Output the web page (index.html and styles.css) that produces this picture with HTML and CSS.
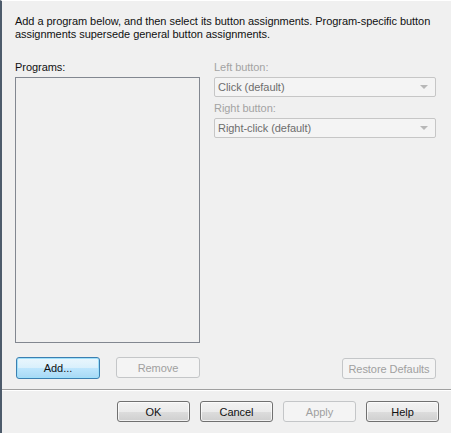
FILE: index.html
```html
<!DOCTYPE html>
<html lang="en">
<head>
    <meta charset="UTF-8">
    <title>Program Button Assignments</title>
    <link rel="stylesheet" href="styles.css">
</head>
<body>
    <div class="dialog">
        <div class="content">
            <p class="intro">Add a program below, and then select its button assignments. Program-specific button assignments supersede general button assignments.</p>
            <div class="panes">
                <!-- Program list -->
                <div class="programs-pane">
                    <label class="field-label">Programs:</label>
                    <div class="listbox"></div>
                    <div class="list-buttons">
                        <button class="button default add">Add...</button>
                        <button class="button disabled remove">Remove</button>
                    </div>
                </div>
                <!-- Button assignments -->
                <div class="assign-pane">
                    <label class="field-label disabled-label">Left button:</label>
                    <div class="combo"><span>Click (default)</span><span class="arrow"></span></div>
                    <label class="field-label disabled-label second">Right button:</label>
                    <div class="combo"><span>Right-click (default)</span><span class="arrow"></span></div>
                    <button class="button disabled restore">Restore Defaults</button>
                </div>
            </div>
        </div>
        <div class="footer">
            <button class="button">OK</button>
            <button class="button">Cancel</button>
            <button class="button disabled">Apply</button>
            <button class="button">Help</button>
        </div>
    </div>
</body>
</html>
```

FILE: styles.css
```css
/* General */
body {
    margin: 0;
    width: 451px;
    height: 433px;
    overflow: hidden;
    background-color: #f0f0f0;
    font-family: "Liberation Sans", Arial, sans-serif;
    font-size: 11px;
    letter-spacing: -0.05px;
    color: #111111;
}

.dialog {
    height: 433px;
    box-sizing: border-box;
    border-left: 2px solid #4d5b6b; /* window frame */
    border-top: 1px solid #ffffff;
    display: flex;
    flex-direction: column;
}

.content {
    padding: 0 13px 0 13px;
}

/* Intro text */
.intro {
    margin: 14px 0 0 0;
    line-height: 13px;
}

/* Two panes */
.panes {
    display: flex;
    gap: 14px;
    margin-top: 20px;
}

.programs-pane {
    width: 185px;
    display: flex;
    flex-direction: column;
}

.assign-pane {
    width: 222px;
    display: flex;
    flex-direction: column;
}

.field-label {
    display: block;
    line-height: 13px;
    height: 13px;
    margin-bottom: 3px;
}

.disabled-label {
    color: #a3a3a3;
}

.second {
    margin-top: 5px;
}

/* Program list */
.listbox {
    height: 264px;
    border: 1px solid #828790;
    background-color: #f0f0f0;
}

.list-buttons {
    display: flex;
    gap: 16px;
    margin-top: 14px;
    padding-left: 1px;
}

/* Combos */
.combo {
    height: 18px;
    border: 1px solid #c6c6c6;
    border-radius: 2px;
    background-color: #f4f4f4;
    color: #6d6d6d;
    display: flex;
    align-items: center;
    justify-content: space-between;
    padding: 0 7px 0 3px;
    line-height: 18px;
}

.arrow {
    width: 0;
    height: 0;
    border-left: 4px solid transparent;
    border-right: 4px solid transparent;
    border-top: 4px solid #b8b8b8;
}

/* Buttons */
.button {
    font-family: inherit;
    font-size: 11px;
    letter-spacing: -0.05px;
    white-space: nowrap;
    height: 21px;
    width: 73px;
    padding: 0;
    color: #111111;
    border: 1px solid #707070;
    border-radius: 3px;
    background: linear-gradient(#f2f2f2 0%, #ebebeb 50%, #dddddd 51%, #cfcfcf 100%);
    box-shadow: inset 0 0 0 1px rgba(255, 255, 255, 0.7);
}

.default {
    border-color: #3c7fb1;
    background: linear-gradient(#eaf6fd 0%, #d9f0fc 50%, #bee6fd 51%, #a7d9f5 100%);
    box-shadow: inset 0 0 0 1px #9fe0fa;
}

.disabled {
    color: #a0a0a0;
    border-color: #c4c6c8;
    background: #f4f4f4;
    box-shadow: none;
}

.add {
    width: 84px;
    height: 22px;
}

.remove {
    width: 84px;
}

.restore {
    margin-top: auto;
    align-self: flex-end;
    width: 94px;
}

/* Footer */
.footer {
    margin-top: 10px;
    border-top: 1px solid #a0a0a0;
    box-shadow: inset 0 1px 0 #ffffff;
    display: flex;
    justify-content: flex-end;
    gap: 10px;
    padding: 11px 12px 0 0;
}
```
